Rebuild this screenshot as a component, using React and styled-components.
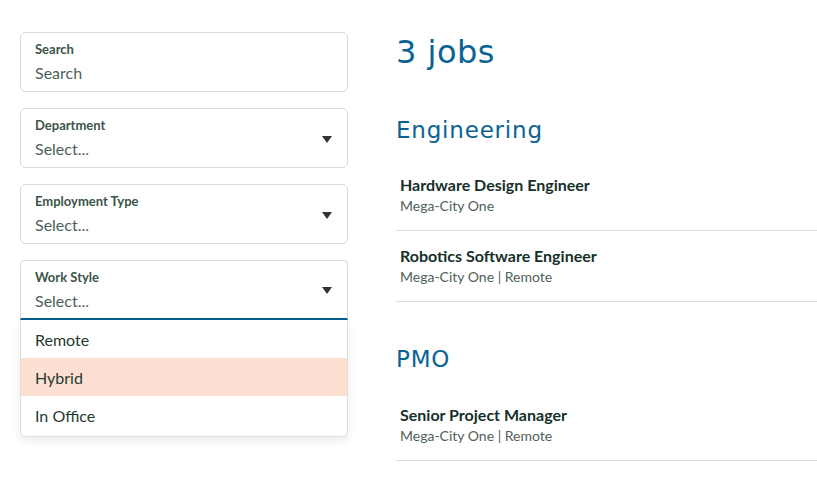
import React from "react";
import styled, { createGlobalStyle } from "styled-components";

const GlobalStyle = createGlobalStyle`
  html, body {
    margin: 0;
    padding: 0;
    background: #ffffff;
  }
  body {
    font-family: Lato, "Noto Sans", sans-serif;
  }
`;

const Page = styled.div`
  display: grid;
  grid-template-columns: 328px 1fr;
  column-gap: 48px;
  padding: 32px 0 0 20px;
  width: 817px;
  box-sizing: border-box;
`;

const Filters = styled.div`
  display: flex;
  flex-direction: column;
  gap: 16px;
`;

const FieldWrap = styled.div`
  position: relative;
`;

const Field = styled.div`
  display: flex;
  align-items: center;
  box-sizing: border-box;
  height: 60px;
  padding: 8px 15px 8px 14px;
  border: 1px solid #d9d9d9;
  border-radius: ${(p) => (p.open ? "5px 5px 0 0" : "5px")};
  border-bottom: ${(p) => (p.open ? "2px solid #005d8a" : "1px solid #d9d9d9")};
  background: #fff;
`;

const FieldText = styled.div`
  flex: 1;
  display: flex;
  flex-direction: column;
  gap: 6px;
`;

const Label = styled.div`
  font-size: 13px;
  line-height: 16px;
  font-weight: 700;
  color: #3b5449;
`;

const Value = styled.div`
  font-size: 16px;
  line-height: 20px;
  color: #4d5f59;
`;

const Caret = styled.span`
  width: 0;
  height: 0;
  border-left: 5px solid transparent;
  border-right: 5px solid transparent;
  border-top: 7px solid #333;
  margin-top: 2px;
`;

const Menu = styled.ul`
  position: absolute;
  top: 100%;
  left: 0;
  right: 0;
  margin: 0;
  padding: 0 0 2px;
  list-style: none;
  background: #fff;
  border: 1px solid #dddddd;
  border-top: none;
  border-radius: 0 0 5px 5px;
  box-shadow: 0 4px 10px rgba(0, 0, 0, 0.08);
  z-index: 2;
`;

const Option = styled.li`
  height: 38px;
  display: flex;
  align-items: center;
  padding: 0 14px;
  font-size: 16px;
  color: #1f3a31;
  background: ${(p) => (p.active ? "#fde0d2" : "transparent")};
`;

const Results = styled.div`
  display: flex;
  flex-direction: column;
`;

const Count = styled.h1`
  margin: 0;
  font-family: "DejaVu Sans", sans-serif;
  font-weight: 400;
  font-size: 32px;
  line-height: 40px;
  letter-spacing: 0.5px;
  color: #0a6394;
`;

const Department = styled.h2`
  margin: ${(p) => (p.first ? "42px 0 14px" : "41px 0 15px")};
  font-family: "DejaVu Sans", sans-serif;
  font-weight: 400;
  font-size: 23px;
  line-height: 32px;
  letter-spacing: 0.8px;
  color: #0a6394;
`;

const JobRow = styled.div`
  padding: 13px 4px 14px;
  border-bottom: 1px solid #dcdcdc;
`;

const JobTitle = styled.div`
  font-size: 16px;
  line-height: 23px;
  font-weight: 700;
  color: #16302a;
`;

const JobLocation = styled.div`
  font-size: 14px;
  line-height: 20px;
  color: #4f615b;
`;

const filters = [
  { label: "Department", value: "Select..." },
  { label: "Employment Type", value: "Select..." },
];

const groups = [
  {
    name: "Engineering",
    jobs: [
      { title: "Hardware Design Engineer", location: "Mega-City One" },
      { title: "Robotics Software Engineer", location: "Mega-City One | Remote" },
    ],
  },
  {
    name: "PMO",
    jobs: [{ title: "Senior Project Manager", location: "Mega-City One | Remote" }],
  },
];

export default function App() {
  return (
    <>
      <GlobalStyle />
      <Page>
        <Filters>
          <Field>
            <FieldText>
              <Label>Search</Label>
              <Value>Search</Value>
            </FieldText>
          </Field>
          {filters.map((f) => (
            <Field key={f.label}>
              <FieldText>
                <Label>{f.label}</Label>
                <Value>{f.value}</Value>
              </FieldText>
              <Caret />
            </Field>
          ))}
          <FieldWrap>
            <Field open>
              <FieldText>
                <Label>Work Style</Label>
                <Value>Select...</Value>
              </FieldText>
              <Caret />
            </Field>
            <Menu>
              <Option>Remote</Option>
              <Option active>Hybrid</Option>
              <Option>In Office</Option>
            </Menu>
          </FieldWrap>
        </Filters>

        <Results>
          <Count>3 jobs</Count>
          {groups.map((g, i) => (
            <div key={g.name}>
              <Department first={i === 0}>{g.name}</Department>
              {g.jobs.map((j) => (
                <JobRow key={j.title}>
                  <JobTitle>{j.title}</JobTitle>
                  <JobLocation>{j.location}</JobLocation>
                </JobRow>
              ))}
            </div>
          ))}
        </Results>
      </Page>
    </>
  );
}
